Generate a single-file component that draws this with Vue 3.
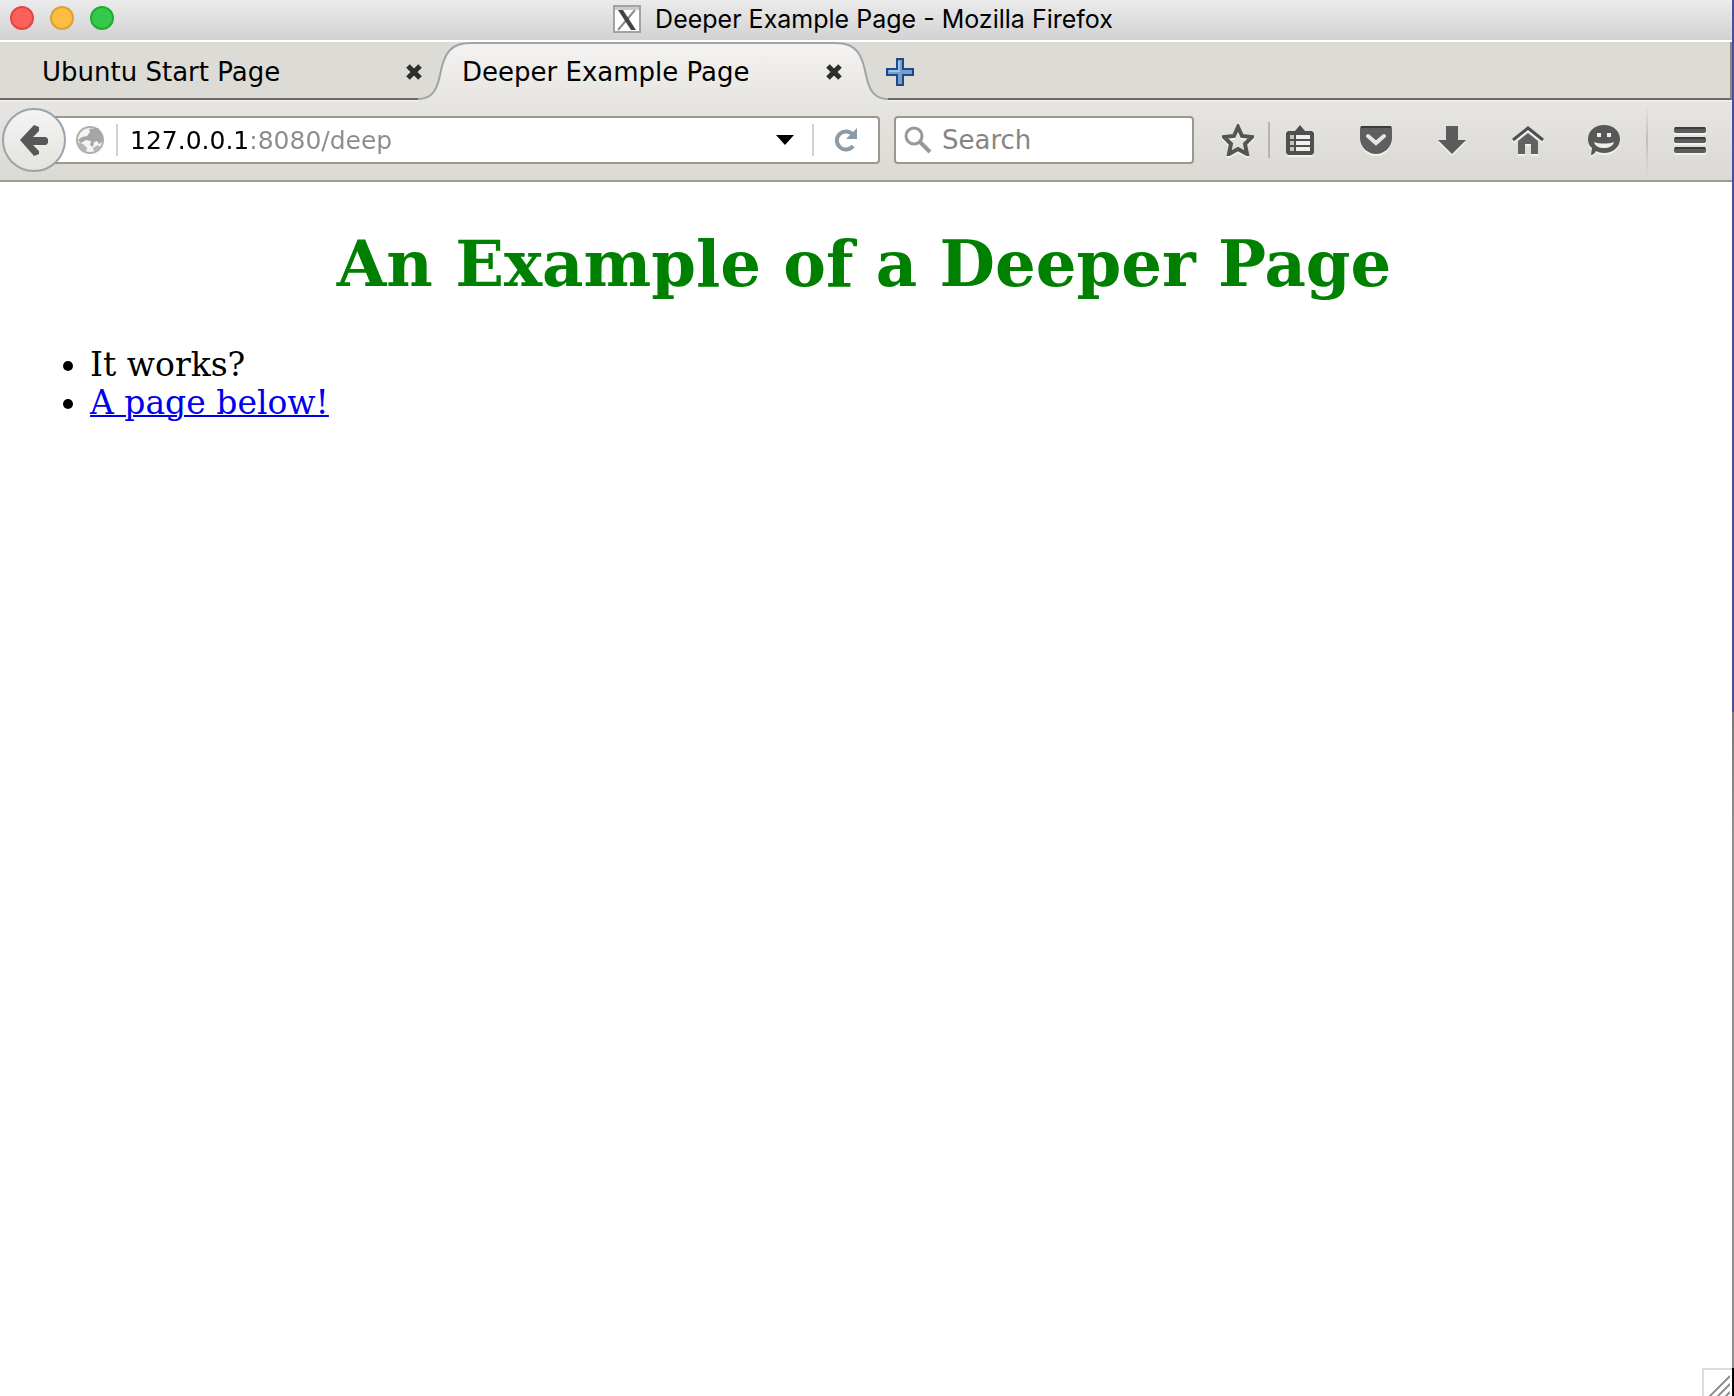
<script setup>
import { ref } from 'vue'

const title = 'Deeper Example Page'
const address = ref('127.0.0.1:8080/deep')
const query = ref('')
</script>

<template>
  <div class="desktop">
    <div class="window">
      <header class="titlebar">
        <div class="lights">
          <button class="light red" aria-label="Close window"></button>
          <button class="light amber" aria-label="Minimise window"></button>
          <button class="light green" aria-label="Zoom window"></button>
        </div>
        <div class="caption">
          <svg width="28" height="28" viewBox="0 0 28 28" aria-hidden="true">
            <rect x="1" y="1" width="26" height="26" fill="#fff" stroke="#a2a2a2" stroke-width="2" />
            <path d="M2 2h24v3H2z" fill="#ccc" />
            <path d="M22 5 5 25" stroke="#8c8c8c" stroke-width="2" />
            <path d="M5 5h5l13 20h-5z" fill="#444" />
          </svg>
          <span>{{ title }} - Mozilla Firefox</span>
        </div>
      </header>

      <div class="tabstrip">
        <div class="tab">
          <button class="tab-label">Ubuntu Start Page</button>
          <button class="close" aria-label="Close Ubuntu Start Page">
            <svg width="16" height="16" viewBox="0 0 16 16"><path d="M2 2l12 12M14 2 2 14" stroke="#2e2e2a" stroke-width="5" /></svg>
          </button>
        </div>
        <div class="tab active">
          <svg class="shape" width="470" height="60" viewBox="0 0 470 60" aria-hidden="true">
            <defs>
              <linearGradient id="tabfill" x1="0" y1="0" x2="0" y2="1">
                <stop offset="0" stop-color="#f4f3f2" />
                <stop offset="1" stop-color="#e6e5e1" />
              </linearGradient>
            </defs>
            <path d="M0 60V57C14 57 19 48 22 33C26 12 32 1 52 1H418C438 1 444 12 448 33C451 48 456 57 470 57V60z" fill="url(#tabfill)" />
            <path d="M0 57C14 57 19 48 22 33C26 12 32 1 52 1H418C438 1 444 12 448 33C451 48 456 57 470 57" fill="none" stroke="#a0a4a6" stroke-width="2" />
          </svg>
          <button class="tab-label">{{ title }}</button>
          <button class="close" aria-label="Close Deeper Example Page">
            <svg width="16" height="16" viewBox="0 0 16 16"><path d="M2 2l12 12M14 2 2 14" stroke="#2e2e2a" stroke-width="5" /></svg>
          </button>
        </div>
        <button class="new-tab" aria-label="Open a new tab">
          <svg width="28" height="28" viewBox="0 0 28 28">
            <path d="M11 1h6v10h10v6H17v10h-6V17H1v-6h10z" fill="#729fcf" stroke="#204a87" stroke-width="2" />
            <path d="M13 3v10H3" fill="none" stroke="#a4c2e4" stroke-width="2" />
          </svg>
        </button>
      </div>

      <nav class="toolbar">
        <button class="back" aria-label="Back">
          <svg width="28" height="32" viewBox="0 0 28 32"><path d="M0 16 14 1l5 2v4l-6 6h13l2 2v4l-2 2H13l6 6v3l-5 2z" fill="#585858" /></svg>
        </button>
        <div class="urlbar">
          <svg class="globe" width="28" height="28" viewBox="0 0 28 28" aria-hidden="true">
            <circle cx="14" cy="14" r="13" fill="#f4f4f4" stroke="#b0b0b0" stroke-width="2" />
            <path d="M13 3l9-1 4 7 1 6-4 3-2-3-3 1-1 5-3-2 1-4-5-1-5 3-3-3 4-3 5-1 3-4z" fill="#a6a6a6" />
            <path d="M2 16l5 2 4 4-1 4-6-4zM17 22l5-3 2 2-6 5z" fill="#b4b4b4" />
          </svg>
          <i class="rule"></i>
          <input v-model="address" class="address" type="text" aria-label="Address" spellcheck="false" />
          <button class="history" aria-label="Show history">
            <svg width="18" height="10" viewBox="0 0 18 10"><path d="M0 0h18L9 10z" fill="#000" /></svg>
          </button>
          <i class="rule"></i>
          <button class="reload" aria-label="Reload">
            <svg width="24" height="24" viewBox="0 0 24 24">
              <path d="M19 7A9 9 0 1 0 19 18" fill="none" stroke="#8c9ba8" stroke-width="4" />
              <path d="M23 0v11H12z" fill="#8c9ba8" />
            </svg>
          </button>
        </div>
        <div class="search">
          <svg width="28" height="28" viewBox="0 0 28 28" aria-hidden="true">
            <circle cx="10" cy="10" r="8" fill="none" stroke="#999" stroke-width="3" />
            <path d="m16 16 10 10" stroke="#999" stroke-width="4" />
          </svg>
          <input v-model="query" type="search" placeholder="Search" aria-label="Search" />
        </div>
        <div class="tools">
          <button class="tool star" aria-label="Bookmark this page">
            <svg width="32" height="32" viewBox="0 0 32 32"><path d="m16 3 4 9 10 1-7 7 2 10-9-5-9 5 2-10-7-7 10-1z" fill="none" stroke="#555" stroke-width="4" /></svg>
          </button>
          <i class="rule dark"></i>
          <button class="tool" aria-label="Bookmarks">
            <svg width="28" height="30" viewBox="0 0 28 30">
              <path d="M2 6h7l5-6 5 6h7l2 2v20l-2 2H2l-2-2V8z" fill="#505050" />
              <path d="M4 10h4v4H4zm0 6h4v4H4zm0 6h4v4H4z" fill="#c4c4c2" />
              <path d="M10 10h14v4H10zm0 6h14v4H10zm0 6h14v4H10z" fill="#f0f0ee" />
            </svg>
          </button>
          <button class="tool" aria-label="Save to Pocket">
            <svg width="32" height="28" viewBox="0 0 32 28">
              <path d="M1 0h30l1 2v10a16 16 0 0 1-32 0V2z" fill="#5f5f5f" />
              <path d="M1 0h30v2H1z" fill="#3c3c3c" />
              <path d="m8 10 8 7 8-7" fill="none" stroke="#e8e7e4" stroke-width="4" stroke-linecap="round" />
            </svg>
          </button>
          <button class="tool" aria-label="Downloads">
            <svg width="28" height="28" viewBox="0 0 28 28"><path d="M8 0h12v14h8L14 28 0 14h8z" fill="#5c5c5c" /></svg>
          </button>
          <button class="tool" aria-label="Home">
            <svg width="32" height="28" viewBox="0 0 32 28">
              <path d="M1 14 16 2l15 12" fill="none" stroke="#4e4e4e" stroke-width="3" />
              <path d="M16 7 26 15v13h-7V18h-6v10H6V15z" fill="#626262" />
            </svg>
          </button>
          <button class="tool" aria-label="Start a conversation">
            <svg width="32" height="30" viewBox="0 0 32 30">
              <path d="M16 0c9 0 16 6 16 14s-7 14-16 14c-3 0-6-1-8-2-1 2-3 4-5 4l1-7c-3-2-4-5-4-9C0 6 7 0 16 0z" fill="#585858" />
              <path d="M9 8h4v4H9zm10 0h4v4h-4zM6 17c6 2 14 2 20 0-1 4-5 6-10 6S7 21 6 17z" fill="#eeeeec" />
            </svg>
          </button>
        </div>
        <i class="divider"></i>
        <button class="menu" aria-label="Open menu">
          <svg width="32" height="26" viewBox="0 0 32 26">
            <g fill="#5c5c5c"><rect width="32" height="6" rx="2" /><rect y="10" width="32" height="6" rx="2" /><rect y="20" width="32" height="6" rx="2" /></g>
            <path d="M1 1h30M1 11h30M1 21h30" stroke="#3c3c3c" stroke-width="2" />
          </svg>
        </button>
      </nav>

      <main class="page">
        <h1>An Example of a Deeper Page</h1>
        <ul>
          <li>It works?</li>
          <li><a href="#below">A page below!</a></li>
        </ul>
        <div class="grip">
          <svg width="26" height="26" viewBox="0 0 26 26" aria-hidden="true">
            <path d="M4 28 26 6M12 28 26 14M20 28l6-6" stroke="#8e8e8e" stroke-width="2" />
          </svg>
        </div>
      </main>
    </div>
    <div class="backdrop"></div>
  </div>
</template>

<style>
body {
  margin: 0;
}
</style>

<style scoped>
.desktop {
  display: flex;
  min-height: 100vh;
}

.window {
  display: flex;
  flex: 1;
  flex-direction: column;
  min-width: 0;
  font-family: "DejaVu Sans", sans-serif;
  font-size: 26px;
  color: #000;
}

.backdrop {
  width: 2px;
  background: linear-gradient(#4c4c9c 0 51%, #777 51%, #909090 60% 98%, #000 98%);
}

button {
  display: flex;
  align-items: center;
  justify-content: center;
  padding: 0;
  border: 0;
  background: none;
  color: inherit;
  font: inherit;
}

input {
  min-width: 0;
  padding: 0;
  border: 0;
  outline: 0;
  background: none;
  font: inherit;
}

.titlebar {
  display: grid;
  grid-template-columns: 1fr auto 1fr;
  height: 40px;
  border-bottom: 2px solid #fff;
  background: linear-gradient(#ebebeb, #d2d2d2);
}

.lights {
  display: flex;
  gap: 16px;
  padding: 6px 10px;
}

.light {
  box-sizing: border-box;
  width: 24px;
  height: 24px;
  border: 2px solid;
  border-radius: 50%;
}

.red {
  border-color: #e24642;
  background: #fd5f5b;
}

.amber {
  border-color: #e0a033;
  background: #fdbd41;
}

.green {
  border-color: #20ac30;
  background: #34c94a;
}

.caption {
  display: flex;
  align-items: center;
  gap: 14px;
  padding: 0 6px 2px 0;
  font-family: Inter, sans-serif;
  font-size: 25px;
}

.tabstrip {
  display: flex;
  height: 56px;
  border-right: 2px solid #8c887e;
  border-bottom: 2px solid #6f6b62;
  background: #dcdbd5;
}

.tab {
  position: relative;
  box-sizing: border-box;
  display: flex;
  align-items: center;
  justify-content: space-between;
  width: 418px;
  height: 60px;
  padding-left: 42px;
}

.tab .close {
  z-index: 1;
  width: 16px;
  margin-right: -4px;
}

.tab.active {
  width: 470px;
  padding-left: 44px;
}

.tab.active .close {
  margin-right: 46px;
}

.tab-label {
  position: relative;
}

.shape {
  position: absolute;
  top: 0;
  left: 0;
}

.new-tab {
  width: 28px;
  height: 60px;
  margin-left: -2px;
}

.toolbar {
  box-sizing: border-box;
  display: flex;
  align-items: center;
  height: 82px;
  padding-bottom: 2px;
  border-top: 2px solid #efeeeb;
  border-bottom: 2px solid #a09b92;
  background: linear-gradient(#e6e5e1, #dad9d4);
}

.back {
  z-index: 1;
  box-sizing: border-box;
  width: 64px;
  height: 64px;
  margin-left: 2px;
  border: 2px solid #9aa3ad;
  border-radius: 50%;
  background: linear-gradient(#f5f4f3, #e4e3df);
}

.urlbar,
.search {
  box-sizing: border-box;
  display: flex;
  align-items: center;
  height: 48px;
  border: 2px solid #9d978d;
  border-radius: 4px;
  background: #fff;
}

.urlbar {
  flex: 1;
  min-width: 0;
  margin-left: -16px;
  padding-left: 24px;
}

.rule {
  width: 2px;
  height: 32px;
  background: #d2d2d2;
}

.globe {
  margin-right: 12px;
}

.address {
  flex: 1;
  height: 46px;
  margin-left: 12px;
  background: linear-gradient(to right, #000 119px, #8c8c8c 119px);
  background-clip: text;
  -webkit-text-fill-color: transparent;
  font-size: 25px;
}

.history {
  width: 54px;
  height: 44px;
}

.reload {
  width: 64px;
  height: 44px;
}

.search {
  gap: 10px;
  width: 300px;
  margin-left: 14px;
  padding-left: 8px;
}

.search input {
  flex: 1;
  height: 46px;
  appearance: none;
}

.search input::placeholder {
  color: #858585;
  opacity: 1;
}

.tools {
  display: flex;
  align-items: center;
}

.tool {
  width: 76px;
  height: 64px;
}

.tool svg,
.menu svg {
  filter: drop-shadow(0 2px 0 #f2f1ee);
}

.star {
  width: 60px;
  margin-left: 14px;
}

.dark {
  height: 36px;
  margin-right: -8px;
  background: #b4b3b0;
}

.divider {
  width: 2px;
  height: 72px;
  margin-left: 4px;
  background: linear-gradient(#c0bfbb00, #c0bfbb 50%, #c0bfbb00);
}

.menu {
  width: 84px;
  height: 64px;
}

.page {
  display: flex;
  flex: 1;
  flex-direction: column;
  background: #fff;
  font-family: "DejaVu Serif", serif;
  font-size: 33px;
  line-height: 38px;
}

h1 {
  margin: 44px 18px 44px 14px;
  color: #008000;
  font-size: 64px;
  line-height: 76px;
  text-align: center;
}

ul {
  margin: 0;
  padding-left: 90px;
}

a {
  color: #00e;
  text-decoration-thickness: 2px;
}

.grip {
  display: flex;
  align-self: flex-end;
  width: 28px;
  height: 26px;
  margin-top: auto;
  border-top: 2px solid #dcdcdc;
  border-left: 2px solid #dcdcdc;
}
</style>
